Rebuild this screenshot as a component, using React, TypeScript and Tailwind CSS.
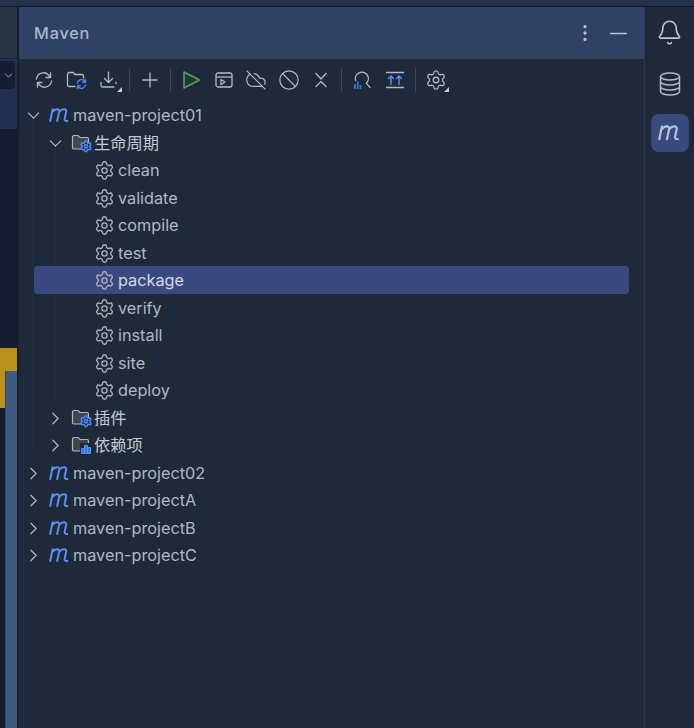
import { Ban, Bell, ChevronDown, ChevronRight, CloudOff, Minus, MoreVertical, Plus, Settings } from 'lucide-react';

const fontStack = 'font-["Inter","Noto_Sans_CJK_SC",sans-serif]';

function BlueGear({ x, y }: { x: number; y: number }) {
	return (
		<g transform={`translate(${x} ${y}) scale(0.54)`}>
			<path
				d="M9.671 4.136a2.34 2.34 0 0 1 4.659 0 2.34 2.34 0 0 0 3.319 1.915 2.34 2.34 0 0 1 2.33 4.033 2.34 2.34 0 0 0 0 3.831 2.34 2.34 0 0 1-2.33 4.033 2.34 2.34 0 0 0-3.319 1.915 2.34 2.34 0 0 1-4.659 0 2.34 2.34 0 0 0-3.32-1.915 2.34 2.34 0 0 1-2.33-4.033 2.34 2.34 0 0 0 0-3.831A2.34 2.34 0 0 1 6.35 6.051a2.34 2.34 0 0 0 3.32-1.915"
				fill="#1e2a3a"
				stroke="#4c86ee"
				strokeWidth="3"
			/>
			<circle cx="12" cy="12" r="3" fill="none" stroke="#4c86ee" strokeWidth="3" />
		</g>
	);
}

function FolderIcon({ badge }: { badge: 'gear' | 'bars' }) {
	return (
		<svg width="22" height="20" viewBox="0 0 22 20" fill="none" className="shrink-0">
			<path
				d="M1.5 15V4a1.5 1.5 0 0 1 1.5-1.5h4l2 2h7a1.5 1.5 0 0 1 1.5 1.500v8.500a1.500 1.500 0 0 1-1.500 1.500H3A1.500 1.500 0 0 1 1.500 15z"
				fill="#43474d"
				stroke="#b0b4ba"
				strokeWidth="1.2"
			/>
			{badge === 'gear' ? (
				<BlueGear x={8.5} y={6.8} />
			) : (
				<g>
					<rect x="9" y="8" width="13" height="12" fill="#1e2a3a" />
					<path d="M10.500 18.500v-5h3v5zM13.500 18.500v-8h3v8zM16.500 18.500v-6h3v6z" fill="#3f74d8" stroke="#5b92f2" strokeWidth="1" />
				</g>
			)}
		</svg>
	);
}

function MavenM({ color, size = 22 }: { color: string; size?: number }) {
	return (
		<svg width={size} height={size * 0.64} viewBox="0 0 22 14" fill="none" className="shrink-0">
			<path
				d="M1.200 13L3.600 1.200M3.200 4.200C4.800 2 6.400 1.200 7.900 1.200c1.800 0 2.600 1 2.200 2.800L8.200 13M10.200 3.800C11.700 2 13.300 1.200 14.900 1.200c1.800 0 2.600 1 2.200 2.800l-1.400 6.200c-.4 1.800.3 2.800 2.600 2.800"
				stroke={color}
				strokeWidth="2"
				strokeLinecap="round"
				strokeLinejoin="round"
			/>
		</svg>
	);
}

function Chevron({ open }: { open: boolean }) {
	const Icon = open ? ChevronDown : ChevronRight;
	return <Icon size={21} strokeWidth={1.35} className="text-[#b4b8bf] shrink-0" />;
}

function Row({ label, level, open, selected }: { label: string; level: 'root' | 'group' | 'goal'; open?: boolean; selected?: boolean }) {
	return (
		<div className={`relative h-[27.5px] even:pt-[1px] leading-[20.5px] flex items-center rounded-[4px] ${selected ? 'bg-[#3a4a80] text-[#d5dbe6]' : 'text-[#b0b8c4]'}`}>
			{level === 'root' && (
				<>
					<div className="-ml-[11.5px] w-[21px] shrink-0">
						<Chevron open={!!open} />
					</div>
					<div className="ml-[5.5px]">
						<MavenM color="#5a8ef0" />
					</div>
					<span className="ml-[2px]">{label}</span>
				</>
			)}
			{level === 'group' && (
				<>
					<div className="ml-[10.5px] w-[21px] shrink-0">
						<Chevron open={!!open} />
					</div>
					<div className="ml-[5.5px] mr-px">
						<FolderIcon badge={label === '依赖项' ? 'bars' : 'gear'} />
					</div>
					<span className="text-[#c4cad2]">{label}</span>
				</>
			)}
			{level === 'goal' && (
				<>
					<Settings size={21} strokeWidth={1.5} className="ml-[59.5px] text-[#b0b4ba] shrink-0" />
					<span className="ml-[3.5px]">{label}</span>
				</>
			)}
		</div>
	);
}

function ToolIcon({ children, corner }: { children: React.ReactNode; corner?: boolean }) {
	return (
		<div className="w-[32.5px] h-[26px] shrink-0 flex items-center justify-center relative">
			{children}
			{corner && <div className="absolute right-[3px] bottom-[1px] w-0 h-0 border-l-[5px] border-l-transparent border-b-[5px] border-b-[#c8ccd2]" />}
		</div>
	);
}

function Sep() {
	return (
		<div className="w-[8.5px] shrink-0 flex justify-center">
			<div className="w-px h-[24px] bg-[#39465a]" />
		</div>
	);
}

function Toolbar() {
	const stroke = '#b6bac0';
	return (
		<div className="h-[42px] flex items-center pl-[8.75px]">
			<ToolIcon>
				<svg width="20" height="20" viewBox="0 0 20 20" fill="none" stroke={stroke} strokeWidth="1.3" strokeLinecap="round" strokeLinejoin="round">
					<path d="M2.500 9.500a7 7 0 0 1 12-4l2 2.500M16.500 3.500V8H12" transform="translate(0 -.5)" />
					<path d="M17.500 10.500a7 7 0 0 1-12 4l-2-2.500M3.500 16.500V12H8" transform="translate(0 .5)" />
				</svg>
			</ToolIcon>
			<ToolIcon>
				<svg width="22" height="20" viewBox="0 0 22 20" fill="none" strokeLinecap="round" strokeLinejoin="round">
					<path d="M9 16.500H3A1.500 1.500 0 0 1 1.500 15V4A1.500 1.500 0 0 1 3 2.500h4l2 2h7A1.500 1.500 0 0 1 17.500 6v2" stroke={stroke} strokeWidth="1.3" />
					<path d="M11.500 13a4 4 0 0 1 7-2l1 1.200M19.500 9.500v2.800h-2.800M19.500 15a4 4 0 0 1-7 2l-1-1.200M11.500 18.500v-2.800h2.800" stroke="#4c86ee" strokeWidth="1.4" />
				</svg>
			</ToolIcon>
			<ToolIcon corner>
				<svg width="20" height="20" viewBox="0 0 20 20" fill="none" stroke={stroke} strokeWidth="1.3" strokeLinecap="round" strokeLinejoin="round">
					<path d="M9.500 2v10M5.500 8.500l4 4 4-4M2 12.500v3A1.500 1.500 0 0 0 3.500 17H15" />
					<path d="M17 12.500v1" />
				</svg>
			</ToolIcon>
			<Sep />
			<ToolIcon>
				<Plus size={24} strokeWidth={1.3} color={stroke} />
			</ToolIcon>
			<Sep />
			<ToolIcon>
				<svg width="19" height="20" viewBox="0 0 19 20" fill="none">
					<path d="M2 2v16l15.500-8z" stroke="#55a35a" strokeWidth="1.500" strokeLinejoin="round" fill="#253a36" />
				</svg>
			</ToolIcon>
			<ToolIcon>
				<svg width="18" height="18" viewBox="0 0 18 18" fill="none" stroke={stroke} strokeWidth="1.3" strokeLinejoin="round">
					<rect x="1" y="2" width="16" height="14" rx="2" />
					<path d="M1 6h16" />
					<path d="M6 8.500v5l4-2.500z" />
				</svg>
			</ToolIcon>
			<ToolIcon>
				<CloudOff size={22} strokeWidth={1.3} color={stroke} />
			</ToolIcon>
			<ToolIcon>
				<Ban size={22} strokeWidth={1.3} color={stroke} />
			</ToolIcon>
			<ToolIcon>
				<svg width="14" height="16" viewBox="0 0 14 16" fill="none" stroke={stroke} strokeWidth="1.3" strokeLinecap="round" strokeLinejoin="round">
					<path d="M2 1.500l5 5.500 5-5.500M2 14.500L7 9.500l5 5" />
				</svg>
			</ToolIcon>
			<Sep />
			<ToolIcon>
				<svg width="20" height="20" viewBox="0 0 20 20" fill="none" strokeLinecap="round">
					<path d="M3.600 10.500a6.500 6.500 0 1 1 10.800 2.800l3.600 4.200" stroke={stroke} strokeWidth="1.3" />
					<path d="M2 14h1.700v5H2zM4.800 11.500h1.700V19H4.800zM7.600 15h1.700v4H7.600z" fill="#3f74d8" />
				</svg>
			</ToolIcon>
			<ToolIcon>
				<svg width="20" height="18" viewBox="0 0 20 18" fill="none" strokeLinecap="round" strokeLinejoin="round">
					<path d="M1.500 1.500h17M1.500 16.500h17" stroke={stroke} strokeWidth="1.3" />
					<path d="M6 13.500V5M3.500 7.500L6 5l2.500 2.500M14 13.500V5M11.500 7.500L14 5l2.500 2.500" stroke="#5b92f2" strokeWidth="1.4" />
				</svg>
			</ToolIcon>
			<Sep />
			<ToolIcon corner>
				<Settings size={22} strokeWidth={1.4} color={stroke} />
			</ToolIcon>
		</div>
	);
}

const goals = ['clean', 'validate', 'compile', 'test', 'package', 'verify', 'install', 'site', 'deploy'];

function LeftStrip() {
	return (
		<div className="w-[17px] shrink-0 relative flex flex-col bg-[#161d33]">
			<div className="h-[51px] bg-[#253545] border-b border-[#1a2233] box-content" />
			<div className="h-[70px] bg-[#223055] pt-[2px]">
				<div className="h-[28px] w-[15px] bg-[#161d33] rounded-r-[4px] flex items-center justify-end">
					<ChevronDown size={13} strokeWidth={1.6} className="text-[#b4b8bf]" />
				</div>
			</div>
			<div className="h-[219px] shrink-0" />
			<div className="h-[60px] bg-[#b8901a]" />
			<div className="absolute left-[5px] right-0 top-[364px] bottom-0 bg-[#3d5a80] border-l border-[#2c4466]" />
		</div>
	);
}

export default function App() {
	return (
		<div className={`w-[694px] h-[728px] overflow-hidden flex flex-col bg-[#1e2a3a] text-[16.25px] ${fontStack}`}>
			<div className="h-[6px] shrink-0 bg-[#24324a]" />
			<div className="h-px shrink-0 bg-[#141a28]" />
			<div className="flex-1 flex min-h-0">
				<LeftStrip />
				<div className="w-[2px] shrink-0 bg-[#17202f]" />
				<div className="w-[625px] shrink-0 flex flex-col relative">
					<div className="h-[52px] bg-[#2f4264] flex items-center justify-between pl-[15px] pr-[12.5px]">
						<span className="text-[#a9b8cc] font-medium tracking-[0.8px] pt-px">Maven</span>
						<div className="flex items-center gap-[8.5px]">
							<MoreVertical size={22} strokeWidth={1.6} className="text-[#c0c6ce]" />
							<Minus size={27} strokeWidth={1.2} className="text-[#c0c6ce]" />
						</div>
					</div>
					<Toolbar />
					<div className="px-[15px] pt-[0.25px] relative">
						<div className="absolute left-[13px] top-[16px] h-[332px] w-px bg-[#222f43]" />
						<div className="absolute left-[36px] top-[43px] h-[258px] w-px bg-[#222f43]" />
						<Row label="maven-project01" level="root" open />
						<Row label="生命周期" level="group" open />
						{goals.map((g) => (
							<Row key={g} label={g} level="goal" selected={g === 'package'} />
						))}
						<Row label="插件" level="group" />
						<Row label="依赖项" level="group" />
						<Row label="maven-project02" level="root" />
						<Row label="maven-projectA" level="root" />
						<Row label="maven-projectB" level="root" />
						<Row label="maven-projectC" level="root" />
					</div>
				</div>
				<div className="flex-1 border-l border-[#2a3a55] flex flex-col items-center pt-[12px]">
					<Bell size={27} strokeWidth={1.4} className="text-[#c4c8ce]" />
					<svg width="22" height="24" viewBox="0 0 22 24" fill="none" stroke="#b6bac0" strokeWidth="1.500" className="mt-[26px]">
						<ellipse cx="11" cy="4.500" rx="9.500" ry="3.500" />
						<path d="M1.500 4.500v15c0 2 4.300 3.500 9.500 3.500s9.500-1.500 9.500-3.500v-15M1.500 9.500c0 2 4.300 3.500 9.500 3.500s9.500-1.500 9.500-3.500M1.500 14.500c0 2 4.300 3.500 9.500 3.500s9.500-1.500 9.500-3.500" />
					</svg>
					<div className="mt-[18px] w-[38px] h-[38px] rounded-[8px] bg-[#3a4a80] flex items-center justify-center">
						<MavenM color="#b4c4d4" size={24} />
					</div>
				</div>
			</div>
		</div>
	);
}
